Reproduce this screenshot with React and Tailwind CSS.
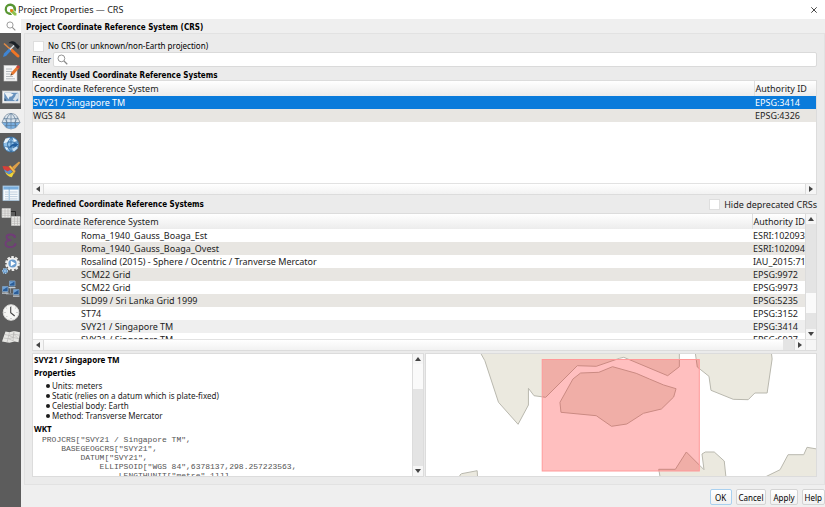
import React from 'react';

const recentRows = [
  ['SVY21 / Singapore TM', 'EPSG:3414', 'bg-[#0a7bdb] text-white'],
  ['WGS 84', 'EPSG:4326', 'bg-[#e8e6e2]'],
];

const predefinedRows = [
  ['Roma_1940_Gauss_Boaga_Est', 'ESRI:102093', 'bg-white'],
  ['Roma_1940_Gauss_Boaga_Ovest', 'ESRI:102094', 'bg-[#e8e6e2]'],
  ['Rosalind (2015) - Sphere / Ocentric / Tranverse Mercator', 'IAU_2015:71', 'bg-white'],
  ['SCM22 Grid', 'EPSG:9972', 'bg-[#e8e6e2]'],
  ['SCM22 Grid', 'EPSG:9973', 'bg-white'],
  ['SLD99 / Sri Lanka Grid 1999', 'EPSG:5235', 'bg-[#e8e6e2]'],
  ['ST74', 'EPSG:3152', 'bg-white'],
  ['SVY21 / Singapore TM', 'EPSG:3414', 'bg-[#efefef]'],
  ['SVY21 / Singapore TM', 'EPSG:6927', 'bg-white'],
];

const properties = [
  'Units: meters',
  'Static (relies on a datum which is plate-fixed)',
  'Celestial body: Earth',
  'Method: Transverse Mercator',
];

const wkt = `PROJCRS["SVY21 / Singapore TM",
    BASEGEOGCRS["SVY21",
        DATUM["SVY21",
            ELLIPSOID["WGS 84",6378137,298.257223563,
                LENGTHUNIT["metre",1]]],`;

function SearchGlyph({ className }) {
  return (
    <svg className={className} viewBox="0 0 12 12" fill="none" stroke="#8a8a8a" aria-hidden="true">
      <circle cx="4.8" cy="4.8" r="3.7" strokeWidth="1" />
      <path d="M7.6 7.6 11.2 11.2" strokeWidth="1.3" />
    </svg>
  );
}

function Icon({ children }) {
  return (
    <svg className="h-5 w-5" viewBox="0 0 20 20" fill="none" aria-hidden="true">
      {children}
    </svg>
  );
}

const sections = [
  ['General', (
    <Icon>
      <path d="M9.5 10 17 17" stroke="#ee7526" strokeWidth="3" strokeLinecap="round" />
      <path d="M3 4.500 9 10" stroke="#e08a45" strokeWidth="1.6" />
      <path d="M2 18 3 14.500 8 9.500 10.200 11.500 5 17Z" fill="#3f85d4" />
      <path d="M9 10.500 15 4.500" stroke="#dde4ea" strokeWidth="1.500" />
      <path d="M7.500 4.200C9.300 2 12.500 1.800 14.300 3.200L18.800 7.600 17 10.300 14.500 7.800 12.200 5.400C10.800 4.400 9.700 4.300 7.500 4.200Z" fill="#1b2127" />
    </Icon>
  )],
  ['Metadata', (
    <Icon>
      <rect x="3" y="2.500" width="13" height="15.500" fill="#f6f6f6" stroke="#d0d0d0" strokeWidth=".6" />
      <path d="M5 6h6M5 8.500h6M5 11h4M5 13.500h7M5 15.800h9" stroke="#aeb3b8" strokeWidth=".9" />
      <path d="m9.500 12.500.8-3L16 3.200l2.400 1.900-5.800 6.500Z" fill="#e97830" />
      <path d="m15.200 4 1-1.300q.8-.9 1.800 0l.5.5q.7.8 0 1.500l-1 1.100Z" fill="#c9443c" />
      <path d="m9.500 12.500.6-2.200 1.700 1.400Z" fill="#5d4e3c" />
    </Icon>
  )],
  ['View Settings', (
    <Icon>
      <rect x="1.500" y="4" width="17.500" height="12" fill="#f4f4f4" stroke="#c9c9c9" strokeWidth=".7" />
      <rect x="3.300" y="5.700" width="14" height="8.500" fill="#6791bd" />
      <path d="M3.500 6h6l3 1.500-2 2-2 .3-1 2.500-2-3Z" fill="#eaf0f5" />
      <path d="M17.300 6v5l-3 3-2.500-1.500L14 9.500l1-2.500Z" fill="#d4e0eb" />
      <path d="M3.500 14v-3l2 2.500Z" fill="#35536f" />
    </Icon>
  )],
  ['CRS', (
    <Icon>
      <path d="M3 7Q5 2.500 10 2.500T17 7l2 4.500-4 5q-5 3-10 0L1 11.500Z" fill="#dbe4ec" stroke="#7b8ea1" strokeWidth=".8" />
      <path d="M1.200 11.500h17.600L15 16.500q-5 2.600-10 0Z" fill="#78aee0" />
      <path d="M3 7.200Q10 9 17 7.200M1.200 11.500h17.600M4 14.500h12M10 2.500v15M10 2.500Q3.500 6 6 17M10 2.500q6.500 3.500 4 14.500M3 7l3.500 4.500L5 16M17 7l-3.500 4.500L15 16" stroke="#5f7d99" strokeWidth=".7" />
    </Icon>
  )],
  ['Transformations', (
    <Icon>
      <circle cx="10" cy="9.500" r="7.500" fill="#8fc1ea" stroke="#3e76aa" strokeWidth=".8" />
      <path d="M3 7h14M3 12h14M10 2v15M10 2Q3 9 10 17M10 2q7 7 0 15" stroke="#366b9e" strokeWidth=".9" />
      <path d="M4.500 3.500 9 3l-3 4.500-3.500.7ZM12 3l4 3-3.500 1ZM3.500 11.500 7 13l-1 2.500Z" fill="#e7f2fa" />
      <path d="M8 14c1-4 3.500-5.500 6.500-5.500l-1-1.500 4 2.500-4 3V11c-2-.3-4 1-5.500 3Z" fill="#215d9d" />
      <path d="m11 14 4.500-2.500 1.500 1.500-4 3.500Z" fill="#c4def4" />
    </Icon>
  )],
  ['Default Styles', (
    <Icon>
      <path d="m10 9 8-6.500 1.200 1.300L12.300 12Z" fill="#dda04a" />
      <path d="m7.500 7.500 2-1 5 5.500-1.200 2.500Z" fill="#f1bb4c" stroke="#ae6c2e" strokeWidth=".5" />
      <path d="M1.500 7 7.200 7.500 10.500 11l-3.800 2-4-2.500Z" fill="#d83f38" />
      <path d="m3 10.300 3.500 2.200 3-1.700 2 2-3.600 2.700-4-2.700Z" fill="#5b91d0" />
      <path d="m4 13 4 2.400 4-2.500 1 1.200-2.200 4.100C8 18 5.800 16.300 4 13Z" fill="#f0d439" />
    </Icon>
  )],
  ['Data Sources', (
    <Icon>
      <rect x="2" y="3" width="16" height="14.500" fill="#f7fafc" stroke="#a9c5de" strokeWidth=".8" />
      <path d="M2.400 3.400h15.200v3.200H2.400Z" fill="#78addd" />
      <path d="M4 9h3.500M9 9h7.500M4 11.300h3.500M9 11.300h7.500M4 13.600h3.500M9 13.600h7.500M4 15.900h3.500M9 15.900h7.500" stroke="#b9cada" strokeWidth=".9" />
      <path d="M8.200 4v13" stroke="#74a4cd" strokeWidth=".8" />
    </Icon>
  )],
  ['Relations', (
    <Icon>
      <path d="M9 4.500h5.500V9" stroke="#242424" strokeWidth=".9" />
      <path d="M1 1.500h8.500v9H1ZM10.500 9.500H19v9h-8.500Z" fill="#e8e8e6" stroke="#c9c9c7" strokeWidth=".7" />
      <path d="M1 4h8.500M1 6.200h8.500M1 8.400h8.500M4 1.500v9M7 1.500v9M10.500 12H19M10.500 14.200H19M10.500 16.400H19M13.500 9.500v9M16.500 9.500v9" stroke="#b5b4b1" strokeWidth=".6" />
    </Icon>
  )],
  ['Variables', (
    <Icon>
      <path d="M14 6C13 2.500 5.500 2.800 5.500 6.100c0 2 2 3 4.800 3C6.500 9.100 4.500 10.600 4.500 12.800c0 4.300 8.500 4.500 10 .2" stroke="#713d78" strokeWidth="1.800" strokeLinecap="round" />
      <circle cx="13.500" cy="5.600" r="1.200" fill="#713d78" />
      <circle cx="14" cy="13.600" r="1.200" fill="#713d78" />
    </Icon>
  )],
  ['Macros', (
    <Icon>
      <circle cx="11.500" cy="8.500" r="6.400" stroke="#ededeb" strokeWidth="2" strokeDasharray="2.600 1.420" />
      <circle cx="11.500" cy="8.500" r="5" fill="#6c9dce" stroke="#f1f1f1" strokeWidth="1.800" />
      <path d="m9.800 5.700 4.700 2.800-4.700 2.800Z" fill="#fff" />
      <circle cx="4" cy="16" r="2.400" fill="#5d94c9" stroke="#a4c5e3" strokeWidth="1.200" strokeDasharray="1.300 .8" />
      <circle cx="4" cy="16" r=".8" fill="#dbe9f5" />
    </Icon>
  )],
  ['QGIS Server', (
    <Icon>
      <path d="M5 8.500h9M9.500 8v6M5 11v4h8" stroke="#929aa1" strokeWidth=".9" />
      <path d="M8.500 2h5.500v5H8.500ZM1.500 7.500H7v5H1.500ZM12.500 10.500H18v5h-5.500Z" fill="#2b5d98" stroke="#86a8ca" strokeWidth=".8" />
      <path d="M9 2.600h4.500l-4.500 2.600ZM2 8.100h4.500L2 10.700ZM13 11.100h4.500L13 13.700Z" fill="#6fa1d4" />
      <path d="M8 8.600h6.500M1 14.200h6.500M12 17.200h6.500" stroke="#c4ccd3" strokeWidth="1.300" />
    </Icon>
  )],
  ['Temporal', (
    <Icon>
      <circle cx="10" cy="9.500" r="7.800" fill="#f6f6f4" stroke="#d9d9d7" strokeWidth="1" />
      <path d="M10 3v1M10 15v1M3.500 9.500h1M15.500 9.500h1M5.400 5l.7.700M14.600 5l-.7.700M5.400 14l.7-.7" stroke="#888" strokeWidth=".7" />
      <path d="M9.700 4v5.700l4 3.300" stroke="#444" strokeWidth="1.100" />
    </Icon>
  )],
  ['Terrain', (
    <Icon>
      <path d="m4.500 4.500 4 .8 4.500-1.300 6 1.300-1.500 10-4-.7-5 1.200L1 14.500Z" fill="#e6e6e3" />
      <path d="m4 7.500 4 1L12.500 7l6 1.300M2.500 11l5 .7 5-1.200 5.500 1.300M8.500 5.300 6 15.500M13 4l-1 10M8 8.500l4 2 1-6M7.500 11.700l5 2.300M12.500 7l5 4.800" stroke="#b5b4b1" strokeWidth=".6" />
    </Icon>
  )],
];

function Arrow({ dir }) {
  const paths = {
    left: 'M6 1v6L2 4Z',
    right: 'M2 1v6l4-3Z',
    up: 'M1 6h6L4 2Z',
    down: 'M1 2h6L4 6Z',
  };
  return (
    <svg className="h-2 w-2" viewBox="0 0 8 8" aria-hidden="true">
      <path d={paths[dir]} fill="#444" />
    </svg>
  );
}

function ScrollButton({ dir }) {
  return (
    <button type="button" aria-label={`Scroll ${dir}`} className="flex h-[10px] w-[10px] shrink-0 items-center justify-center bg-[#f6f6f6]">
      <Arrow dir={dir} />
    </button>
  );
}

function HorizontalBar({ track }) {
  return (
    <div className="flex h-[11px] shrink-0 border-t border-[#e2e2e2] bg-[#f6f6f6]">
      <ScrollButton dir="left" />
      <div className="flex flex-1 border-x border-[#dcdcdc] bg-[#e4e4e4]">
        <div className="flex-1 bg-linear-to-b from-white to-[#f2f2f2]" />
        {track && <div className="w-[11px]" />}
      </div>
      <ScrollButton dir="right" />
      {track && <div className="w-[11px] border-l border-[#e2e2e2]" />}
    </div>
  );
}

function CrsTable({ label, rows, indent, authorityWidth }) {
  return (
    <table aria-label={label} className="w-full table-fixed border-collapse text-left text-[9px] leading-[13px] whitespace-nowrap">
      <colgroup>
        <col />
        <col className={authorityWidth} />
      </colgroup>
      <thead>
        <tr className="h-[15px] bg-linear-to-b from-white to-[#ececec]">
          <th className="p-0 pl-px font-normal">Coordinate Reference System</th>
          <th className="border-l border-[#dedede] p-0 pl-px font-normal">Authority ID</th>
        </tr>
      </thead>
      <tbody>
        {rows.map(([name, id, tone], i) => (
          <tr key={i} className={`h-[13px] ${tone}`}>
            <td className={`p-0 ${indent}`}>{name}</td>
            <td className="p-0 pl-px">{id}</td>
          </tr>
        ))}
      </tbody>
    </table>
  );
}

function ExtentMap() {
  return (
    <svg className="h-full w-full" viewBox="0 0 391 122" preserveAspectRatio="none" role="img" aria-label="CRS extent map">
      <g fill="#ebe9df" stroke="#b9b8ae" strokeWidth="1">
        <path d="M54.700-1 59 6.700 72.700 48.300 92.300 70.300 102.700 51V34.300l5.600 7.400L120 43.300 151.700 11.700l19 .6L194 4.300l4.300-1 44 18.400L254 12.700V-1Z" />
        <path d="M187 12.700 173.300 18.300 155 19 147.300 25 134.300 48.300l1 10L170.700 61.700 186 72.300 201.300 70 218 59.300 236 55 248.300 43 250.700 34.700 238.300 31 224 25 210.700 19.300Z" />
        <path d="M270-1 272 13 283.700 22.300 285.700 36.300 308 45.300 323 45.700 329.700 39H342L347 5l-.7-6Z" />
        <path d="M234.700 123 233.300 115.300H250L261 98l17.700 17.700L276.700 100 280 98h9l10 9 1.700 16Z" />
        <path d="M340 123 355 115.700 363 100.700h15.700L382 93.300 392 95v28Z" />
        <path d="M34 123v-2l1.700-1.300 15.600-3 .4 6.300Z" />
      </g>
      <rect x="116.500" y="5.500" width="157.500" height="111.500" fill="#ff0000" fillOpacity=".25" stroke="#f99" strokeWidth="1" />
    </svg>
  );
}

function FooterButton({ children, primary }) {
  return (
    <button
      type="button"
      className={`h-4 min-w-[22px] rounded-xs border bg-linear-to-b from-white to-[#f1f1f1] px-[2px] text-[8px] leading-[13px] text-black ${primary ? 'border-[#a9d0ef]' : 'border-[#d4d4d4]'}`}
    >
      {children}
    </button>
  );
}

export default function App() {
  return (
    <div className="flex min-h-screen flex-col bg-[#efefef] font-['Noto_Sans',sans-serif] text-[#1c1c1c]">
      <header className="flex h-[19px] items-center bg-white pr-2 pl-1">
        <svg className="h-[13px] w-[13px]" viewBox="0 0 24 24" aria-hidden="true">
          <path d="M11.500 1A10.500 10.500 0 1 0 15 21.500l-3.500-4A6 6 0 1 1 17.300 12l4 4A10.500 10.500 0 0 0 11.500 1Z" fill="#589632" />
          <path d="M11.500 11.500h4l7.500 8V23h-4l-7.500-7.500Z" fill="#8fc04a" />
          <path d="M11.500 11.500h4l2 2-3.500 4-2.500-2.500Z" fill="#ee7913" />
        </svg>
        <h1 className="flex-1 pl-px text-[9px]">Project Properties — CRS</h1>
        <button type="button" aria-label="Close" className="flex h-[10px] w-[7px] items-center justify-center">
          <svg className="h-[6px] w-[6px]" viewBox="0 0 6 6" stroke="#333" strokeWidth=".9" aria-hidden="true">
            <path d="m.3.3 5.400 5.400M5.700.3.3 5.700" />
          </svg>
        </button>
      </header>

      <div className="flex flex-1">
        <nav aria-label="Sections" className="flex w-[21px] shrink-0 flex-col bg-[#5c5c5c]">
          <button type="button" aria-label="Search" className="flex h-[14px] items-center justify-center bg-white">
            <SearchGlyph className="h-[10px] w-[10px]" />
          </button>
          <div className="flex flex-col pt-1">
            {sections.map(([name, icon]) => (
              <button
                key={name}
                type="button"
                aria-label={name}
                className={`flex h-6 items-center justify-center ${name === 'CRS' ? 'bg-[#efefef]' : ''}`}
              >
                {icon}
              </button>
            ))}
          </div>
        </nav>

        <main className="flex min-w-0 flex-1 flex-col pl-[3px]">
          <h2 className="h-[14px] pl-[2px] font-['DejaVu_Sans_Condensed','DejaVu_Sans',sans-serif] text-[8px] leading-[17px] font-bold text-black">Project Coordinate Reference System (CRS)</h2>

          <section className="flex flex-col border border-[#e2e2e2] bg-[#ebebeb] pr-[7px] pb-[7px] pl-[7px]">
            <label className="flex h-[18px] items-center gap-1 pt-[6px] pl-px text-[8px] text-black">
              <input type="checkbox" className="h-[11px] w-[11px] appearance-none border border-[#dedede] bg-white" />
              No CRS (or unknown/non-Earth projection)
            </label>

            <div className="flex h-[15px] items-center gap-[2px]">
              <label htmlFor="filter" className="text-[8px] text-black">Filter</label>
              <div className="relative flex-1">
                <SearchGlyph className="absolute top-[2px] left-1 h-[11px] w-[11px]" />
                <input id="filter" type="text" className="block h-[15px] w-full rounded-xs border border-[#dadada] bg-white pl-5 text-[9px]" />
              </div>
            </div>

            <h3 className="h-[13px] font-['DejaVu_Sans_Condensed','DejaVu_Sans',sans-serif] text-[8px] leading-[17px] font-bold text-black">Recently Used Coordinate Reference Systems</h3>
            <div className="flex h-[115px] flex-col border border-[#dcdcdc] bg-white">
              <div className="flex-1 overflow-hidden">
                <CrsTable label="Recently used" rows={recentRows} indent="" authorityWidth="w-[62px]" />
              </div>
              <HorizontalBar />
            </div>

            <div className="flex h-[18px] items-center justify-between pt-px">
              <h3 className="font-['DejaVu_Sans_Condensed','DejaVu_Sans',sans-serif] text-[8px] leading-[17px] font-bold text-black">Predefined Coordinate Reference Systems</h3>
              <label className="flex items-center gap-1 text-[9px] leading-[14px]">
                <input type="checkbox" className="h-[11px] w-[11px] appearance-none border border-[#dedede] bg-white" />
                Hide deprecated CRSs
              </label>
            </div>
            <div className="flex h-[138px] flex-col border border-[#dcdcdc] bg-white">
              <div className="flex min-h-0 flex-1">
                <div className="min-w-0 flex-1 overflow-hidden">
                  <CrsTable label="Predefined" rows={predefinedRows} indent="pl-12" authorityWidth="w-[53px]" />
                </div>
                <div className="flex w-[11px] flex-col border-l border-[#dcdcdc] bg-[#e4e4e4]">
                  <ScrollButton dir="up" />
                  <div className="flex-1" />
                  <div className="h-5 bg-[#fafafa]" />
                  <div className="h-4" />
                  <ScrollButton dir="down" />
                </div>
              </div>
              <HorizontalBar track />
            </div>

            <div className="mt-[2px] grid h-[124px] grid-cols-2 gap-px">
              <div className="flex min-w-0 overflow-hidden border border-[#dcdcdc] bg-white">
                <div className="min-w-0 flex-1 overflow-hidden pt-px pl-px text-[8px] leading-[10px]">
                  <h4 className="pb-[3px] font-bold text-black">SVY21 / Singapore TM</h4>
                  <h4 className="pb-[3px] font-bold text-black">Properties</h4>
                  <ul className="pl-3">
                    {properties.map((text) => (
                      <li key={text} className="flex items-center gap-[2px] before:h-1 before:w-1 before:rounded-full before:bg-[#1c1c1c]">
                        {text}
                      </li>
                    ))}
                  </ul>
                  <h4 className="pt-[3px] pb-px font-bold text-black">WKT</h4>
                  <pre className="pl-2 font-['Liberation_Mono',monospace] text-[8px] leading-[9px] text-[#555]">{wkt}</pre>
                </div>
                <div className="flex w-[11px] flex-col border-l border-[#dcdcdc] bg-[#e4e4e4]">
                  <ScrollButton dir="up" />
                  <div className="h-[25px] bg-[#fafafa]" />
                  <div className="flex-1" />
                  <ScrollButton dir="down" />
                </div>
              </div>
              <div className="overflow-hidden border border-[#dcdcdc] bg-white">
                <ExtentMap />
              </div>
            </div>
          </section>

          <footer className="flex justify-end gap-1 pt-1">
            <FooterButton primary>OK</FooterButton>
            <FooterButton>Cancel</FooterButton>
            <FooterButton>Apply</FooterButton>
            <FooterButton>Help</FooterButton>
          </footer>
        </main>
      </div>
    </div>
  );
}
